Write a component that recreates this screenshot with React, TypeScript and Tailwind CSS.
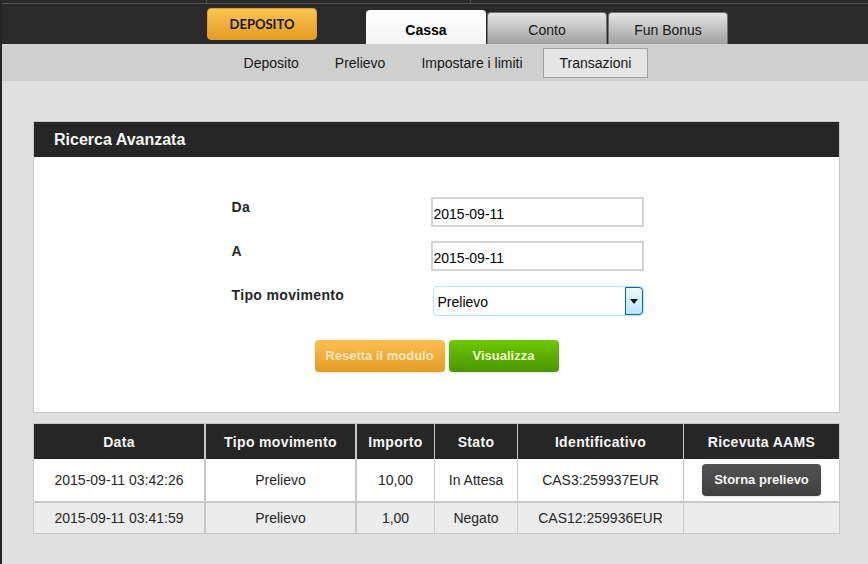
const rowCols = 'grid grid-cols-[170px_151px_79px_83px_166px_1fr]';

const subLinks = ['Deposito', 'Prelievo', 'Impostare i limiti'];

const rows = [
  { data: '2015-09-11 03:42:26', tipo: 'Prelievo', importo: '10,00', stato: 'In Attesa', id: 'CAS3:259937EUR', storna: true },
  { data: '2015-09-11 03:41:59', tipo: 'Prelievo', importo: '1,00', stato: 'Negato', id: 'CAS12:259936EUR', storna: false },
];

function sep(i: number) {
  if (i === 0) return '';
  return i < 3 ? 'border-l-2 border-[#c8c8c8]' : 'border-l border-[#c8c8c8]';
}

function Tab({ label, active }: { label: string; active?: boolean }) {
  return (
    <div
      className={
        active
          ? 'flex h-8.5 w-30 items-center justify-center rounded-t-sm bg-linear-to-b from-white to-neutral-100 pt-1.5 font-bold text-black'
          : 'flex h-8 w-30 items-center justify-center rounded-t-sm border-x border-t border-neutral-500 bg-linear-to-b from-neutral-200 to-neutral-400 pt-0.5 text-neutral-900'
      }
    >
      {label}
    </div>
  );
}

function DateField({ value }: { value: string }) {
  return (
    <input
      readOnly
      defaultValue={value}
      className="h-7.5 w-full border-2 border-neutral-300 bg-white px-px pt-1 text-sm text-black outline-none"
    />
  );
}

export default function App() {
  return (
    <div
      className="flex h-screen flex-col overflow-hidden border-l-2 border-neutral-800 bg-[#e0e0e0] text-sm text-neutral-800"
      style={{ fontFamily: '"Liberation Sans", Arial, sans-serif' }}
    >
      <header className="h-11 shrink-0 bg-[#2a2a2a]">
        <div className="flex h-1 border-b border-neutral-600">
          <div className="w-[205px] border-r border-neutral-600" />
          <div className="w-66 border-r border-neutral-600" />
        </div>
        <div className="flex h-10 items-start pl-[205px]">
          <div
            className="mt-1 flex h-8 w-27.5 items-center justify-center rounded-sm border border-[#e0a030] bg-linear-to-b from-[#fcc452] to-[#e39c20] text-[13px] font-bold text-neutral-900"
            style={{ fontFamily: 'Lato, sans-serif' }}
          >
            DEPOSITO
          </div>
          <div className="ml-[49px] flex h-10 items-end gap-px">
            <Tab label="Cassa" active />
            <Tab label="Conto" />
            <Tab label="Fun Bonus" />
          </div>
        </div>
      </header>

      <nav className="flex h-[37px] shrink-0 items-center justify-center gap-1 bg-[#cfcfcf] pl-1.5">
        {subLinks.map((l) => (
          <a key={l} className="px-4 py-1 text-neutral-900">{l}</a>
        ))}
        <a className="border border-neutral-400 bg-neutral-200 px-4 py-1 text-neutral-900">Transazioni</a>
      </nav>

      <main className="flex-1 pt-10 pr-7 pl-[31px]">
        <section className="border border-[#c8c8c8] bg-white">
          <h2 className="flex h-[35px] items-center bg-neutral-800 px-5 text-base font-bold text-neutral-100">Ricerca Avanzata</h2>
          <div className="pt-10 pb-10">
            <div className="grid grid-cols-[199px_213px] justify-center gap-y-3.5 pl-0.5">
              <label className="font-bold tracking-wide">Da</label>
              <DateField value="2015-09-11" />
              <label className="font-bold tracking-wide">A</label>
              <DateField value="2015-09-11" />
              <label className="font-bold tracking-wide">Tipo movimento</label>
              <div className="mt-px ml-0.5 flex h-7.5 rounded-sm border border-sky-200 bg-white">
                <span className="flex flex-1 items-center pt-0.5 pl-1 text-black">Prelievo</span>
                <span className="flex w-4.5 items-center justify-center rounded-r-sm border border-sky-700 bg-linear-to-b from-sky-50 to-sky-200">
                  <svg width="8" height="5" viewBox="0 0 8 5"><path d="M0 0h8L4 5z" fill="#111" /></svg>
                </span>
              </div>
            </div>
            <div className="mt-6 flex justify-center gap-1">
              <button className="h-8 w-32.5 rounded-sm bg-linear-to-b from-[#fcc050] to-[#e39c20] text-[13px] font-bold text-[#fbe6c0] shadow-sm">Resetta il modulo</button>
              <button className="h-8 w-27.5 rounded-sm bg-linear-to-b from-[#6fc800] to-[#4a9600] text-[13px] font-bold text-lime-100 shadow-sm">Visualizza</button>
            </div>
          </div>
        </section>

        <section className="mt-2.5 border border-[#c8c8c8]">
          <div className={`${rowCols} h-[35px] bg-neutral-800 text-center font-bold tracking-wide text-neutral-100`}>
            {['Data', 'Tipo movimento', 'Importo', 'Stato', 'Identificativo', 'Ricevuta AAMS'].map((h, i) => (
              <div key={h} className={`flex items-center justify-center ${sep(i)}`}>{h}</div>
            ))}
          </div>
          {rows.map((r) => {
            const cells = [r.data, r.tipo, r.importo, r.stato, r.id];
            return (
              <div
                key={r.data}
                className={`${rowCols} text-center ${r.storna ? 'h-10.5 bg-white' : 'h-8 border-t-2 border-[#c8c8c8] bg-[#ececec]'}`}
              >
                {cells.map((c, i) => (
                  <div key={i} className={`flex items-center justify-center ${sep(i)}`}>{c}</div>
                ))}
                <div className={`flex items-center justify-center ${sep(5)}`}>
                  {r.storna && (
                    <button className="h-8 rounded-sm bg-linear-to-b from-neutral-600 to-neutral-700 px-3 text-[13px] font-bold text-neutral-100 shadow-sm">
                      Storna prelievo
                    </button>
                  )}
                </div>
              </div>
            );
          })}
        </section>
      </main>
    </div>
  );
}
